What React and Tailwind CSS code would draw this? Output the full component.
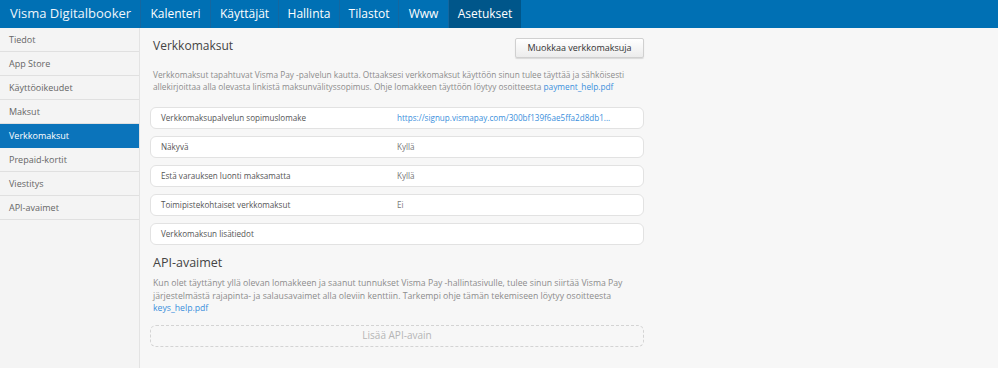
const NAV = [
  { label: 'Kalenteri', w: 'w-[70px]' },
  { label: 'Käyttäjät', w: 'w-[68px]' },
  { label: 'Hallinta', w: 'w-[61px]' },
  { label: 'Tilastot', w: 'w-[59px]' },
  { label: 'Www', w: 'w-[50px]' },
  { label: 'Asetukset', w: 'w-[73px]' },
];
const SIDE = ['Tiedot', 'App Store', 'Käyttöoikeudet', 'Maksut', 'Verkkomaksut', 'Prepaid-kortit', 'Viestitys', 'API-avaimet'];

const ROWS = [
  { label: 'Verkkomaksupalvelun sopimuslomake', value: 'https://signup.vismapay.com/300bf139f6ae5ffa2d8db1...', link: true },
  { label: 'Näkyvä', value: 'Kyllä' },
  { label: 'Estä varauksen luonti maksamatta', value: 'Kyllä' },
  { label: 'Toimipistekohtaiset verkkomaksut', value: 'Ei' },
  { label: 'Verkkomaksun lisätiedot', value: '' },
];

export default function App() {
  return (
    <div className="w-[998px] h-[368px] overflow-hidden flex flex-col bg-[#f7f7f7]"
      style={{ fontFamily: "'Open Sans', 'Noto Sans', sans-serif" }}>
      <header className="h-[28px] flex-shrink-0 flex bg-[#0070b4] text-white">
        <div className="w-[140px] flex items-center pl-[10px] text-[13px] text-[#eef5fb]">Visma Digitalbooker</div>
        {NAV.map((n) => (
          <div key={n.label}
            className={`${n.w} flex items-center justify-center text-[12px] border-l border-[#1467a0] ${n.label === 'Asetukset' ? 'bg-[#00568a]' : ''}`}>
            {n.label}
          </div>
        ))}
      </header>

      <div className="flex flex-1">
        <aside className="w-[140px] flex-shrink-0 bg-[#f4f4f4] border-r border-[#e3e3e3]">
          {SIDE.map((s) => {
            const active = s === 'Verkkomaksut';
            return (
              <div key={s}
                className={`h-[24px] flex items-center pl-[9px] text-[9px] border-b ${active ? 'bg-[#0b74bb] text-white border-[#0b74bb]' : 'text-[#666] border-[#e0e0e0]'}`}>
                {s}
              </div>
            );
          })}
        </aside>

        <main className="flex-1 pl-[10px] pt-[8px]">
          <div className="w-[494px]">
            <div className="flex items-start justify-between">
              <h1 className="pl-[3px] text-[12px] leading-[20px] text-[#444]">Verkkomaksut</h1>
              <button className="mt-[2px] h-[20px] w-[129px] text-[9px] text-[#333] rounded-[2px] border border-[#d0d0d0] bg-gradient-to-b from-white to-[#ececec] shadow-[0_1px_1px_rgba(0,0,0,0.12)]">
                Muokkaa verkkomaksuja
              </button>
            </div>

            <p className="mt-[11px] pl-[3px] pr-[4px] text-[8.3px] leading-[12px] text-[#8c8c8c]">
              Verkkomaksut tapahtuvat Visma Pay -palvelun kautta. Ottaaksesi verkkomaksut käyttöön sinun tulee täyttää ja sähköisesti allekirjoittaa alla olevasta linkistä maksunvälityssopimus. Ohje lomakkeen täyttöön löytyy osoitteesta{' '}
              <span className="text-[#3a8fdc]">payment_help.pdf</span>
            </p>

            <div className="mt-[14px] flex flex-col gap-[7px]">
              {ROWS.map((r) => (
                <div key={r.label}
                  className="h-[22px] flex items-center rounded-[6px] border border-[#e2e2e2] bg-white text-[8.1px]">
                  <span className="w-[246px] pl-[10px] text-[#555]">{r.label}</span>
                  <span className={r.link ? 'text-[#3a8fdc]' : 'text-[#777]'}>{r.value}</span>
                </div>
              ))}
            </div>

            <h2 className="mt-[8px] pl-[3px] text-[12.5px] leading-[20px] text-[#444]">API-avaimet</h2>
            <p className="mt-[4px] pl-[3px] pr-[4px] text-[8.7px] leading-[12.5px] text-[#8c8c8c]">
              Kun olet täyttänyt yllä olevan lomakkeen ja saanut tunnukset Visma Pay -hallintasivulle, tulee sinun siirtää Visma Pay järjestelmästä rajapinta- ja salausavaimet alla oleviin kenttiin. Tarkempi ohje tämän tekemiseen löytyy osoitteesta{' '}
              <span className="text-[#3a8fdc]">keys_help.pdf</span>
            </p>

            <div className="mt-[10px] h-[22px] flex items-center justify-center rounded-[6px] border border-dashed border-[#d4d4d4] text-[10px] text-[#b5b5b5]">
              Lisää API-avain
            </div>
          </div>
        </main>
      </div>
    </div>
  );
}
